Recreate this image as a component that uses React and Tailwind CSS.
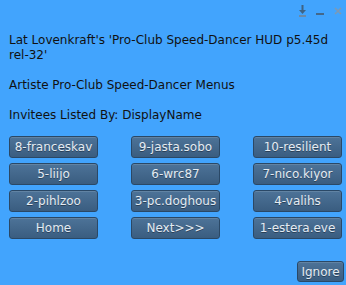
// App.jsx - dialog box with the invitee menu buttons
const BUTTONS = [
  '8-franceskav', '9-jasta.sobo', '10-resilient',
  '5-liijo', '6-wrc87', '7-nico.kiyor',
  '2-pihlzoo', '3-pc.doghous', '4-valihs',
  'Home', 'Next>>>', '1-estera.eve',
];

const DialogButton = ({ label, className = '' }) => (
  <button
    className={`flex items-center justify-center overflow-hidden whitespace-nowrap rounded-[3px] border border-[#2a4866] bg-gradient-to-b from-[#4d7398] to-[#3a5d80] text-[12px] leading-none text-[#e4ecf3] shadow-[inset_0_1px_0_rgba(255,255,255,0.12)] [text-shadow:0_1px_0_rgba(0,0,0,0.35)] ${className}`}
  >
    {label}
  </button>
);

export default function App() {
  return (
    <div
      className="relative min-h-screen w-full bg-[#42a4fd] text-[#111] font-['DejaVu_Sans',sans-serif]"
    >
      {/* Title bar controls */}
      <div className="absolute right-[4px] top-[5px] flex items-start gap-[10px]">
        <svg width="7" height="12" viewBox="0 0 7 12">
          <rect x="2.5" y="0" width="2" height="6" fill="#3e6384" />
          <path d="M0 5 L7 5 L3.5 9 Z" fill="#3e6384" />
          <rect x="0" y="10" width="7" height="2" fill="#6a8aa8" />
        </svg>
        <svg width="8" height="3" viewBox="0 0 8 3" className="mt-[8px]">
          <rect x="0" y="0" width="8" height="2" fill="#44688a" />
        </svg>
        <svg width="8" height="8" viewBox="0 0 8 8" className="mt-[2px]">
          <path d="M1 1 L7 7 M7 1 L1 7" stroke="#7d99b4" strokeWidth="1.6" />
        </svg>
      </div>

      <div className="px-[9px] pt-[33px]">
        <div className="text-[12px] leading-[15px]">
          <p>Lat Lovenkraft's 'Pro-Club Speed-Dancer HUD p5.45d</p>
          <p>rel-32'</p>
          <p className="mt-[15px]">Artiste Pro-Club Speed-Dancer Menus</p>
          <p className="mt-[15px]">Invitees Listed By: DisplayName</p>
        </div>

        <div className="mt-[13px] grid grid-cols-[89px_89px_89px] gap-x-[33px] gap-y-[5px]">
          {BUTTONS.map((label) => (
            <DialogButton key={label} label={label} className="h-[22px] w-[89px]" />
          ))}
        </div>

        <div className="mt-[22px] flex justify-end">
          <DialogButton label="Ignore" className="mr-[-7px] h-[21px] w-[47px]" />
        </div>
      </div>
    </div>
  );
}
